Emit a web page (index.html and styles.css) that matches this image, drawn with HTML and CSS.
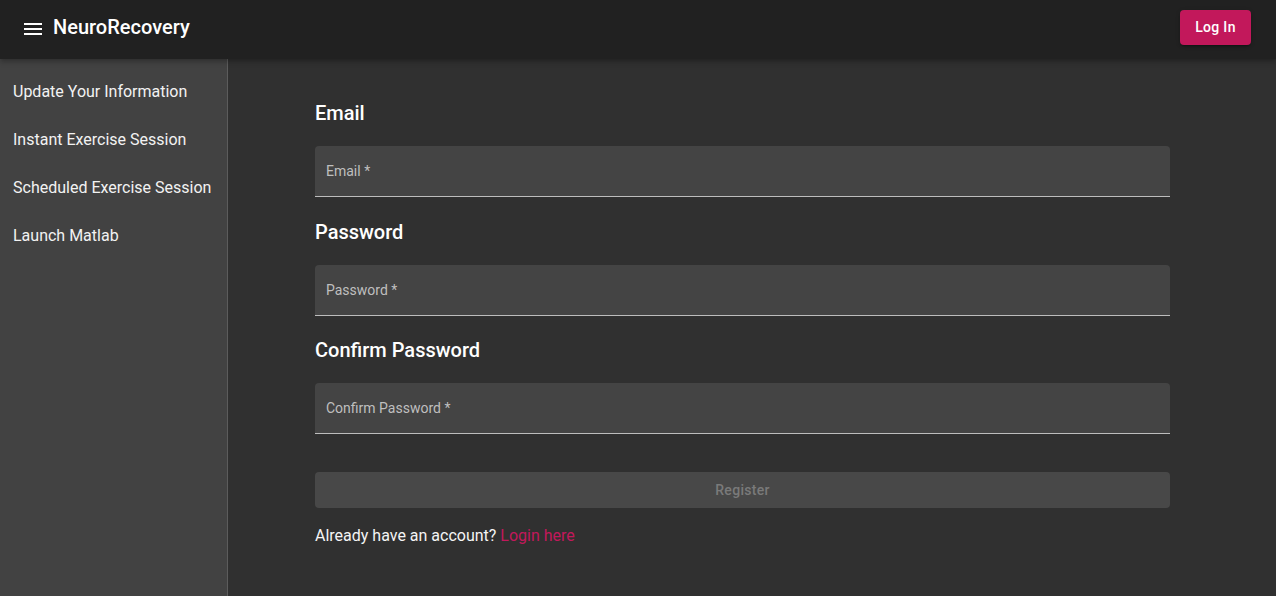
FILE: index.html
```html
<!DOCTYPE html>
<html lang="en">
<head>
<meta charset="utf-8">
<title>NeuroRecovery</title>
<link rel="stylesheet" href="styles.css">
</head>
<body>
<header class="appbar">
  <div class="appbar-left">
    <button class="menu-btn" aria-label="menu">
      <svg width="24" height="24" viewBox="0 0 24 24"><path fill="#fff" d="M3 18h18v-2H3v2zm0-5h18v-2H3v2zm0-7v2h18V6H3z"/></svg>
    </button>
    <h1 class="brand">NeuroRecovery</h1>
  </div>
  <button class="login-btn">Log In</button>
</header>
<div class="layout">
  <nav class="sidebar">
    <ul class="nav-list">
      <li class="nav-item">Update Your Information</li>
      <li class="nav-item">Instant Exercise Session</li>
      <li class="nav-item">Scheduled Exercise Session</li>
      <li class="nav-item">Launch Matlab</li>
    </ul>
  </nav>
  <main class="main">
    <form class="form">
      <h2 class="field-title">Email</h2>
      <div class="input"><span class="input-label">Email *</span></div>
      <h2 class="field-title">Password</h2>
      <div class="input"><span class="input-label">Password *</span></div>
      <h2 class="field-title">Confirm Password</h2>
      <div class="input"><span class="input-label">Confirm Password *</span></div>
      <button type="button" class="register-btn" disabled>Register</button>
      <p class="already">Already have an account? <a class="link" href="#">Login here</a></p>
    </form>
  </main>
</div>
</body>
</html>
```

FILE: styles.css
```css
* { box-sizing: border-box; }
html, body {
  margin: 0;
  padding: 0;
  height: 100%;
}
body {
  font-family: Roboto, "Liberation Sans", Arial, sans-serif;
  background: #303030;
  color: #fff;
  overflow: hidden;
}
.appbar {
  height: 59px;
  background: #212121;
  display: flex;
  align-items: center;
  justify-content: space-between;
  padding: 0 25px 0 21px;
  box-shadow: 0 2px 4px -1px rgba(0,0,0,0.2), 0 4px 5px 0 rgba(0,0,0,0.14);
  position: relative;
  z-index: 2;
}
.appbar-left {
  display: flex;
  align-items: center;
}
.menu-btn {
  background: none;
  border: 0;
  padding: 0;
  width: 24px;
  height: 24px;
  display: flex;
  margin-top: -2px;
  cursor: pointer;
}
.brand {
  margin: -5px 0 0 8px;
  font-size: 20px;
  font-weight: 500;
  line-height: 32px;
}
.login-btn {
  background: #c2185b;
  color: #fff;
  border: 0;
  border-radius: 4px;
  width: 71px;
  height: 35px;
  font-family: inherit;
  font-size: 14px;
  font-weight: 500;
  letter-spacing: 0.3px;
  margin-top: -5px;
  box-shadow: 0 3px 1px -2px rgba(0,0,0,0.2), 0 2px 2px 0 rgba(0,0,0,0.14), 0 1px 5px 0 rgba(0,0,0,0.12);
}
.layout {
  display: flex;
  height: calc(100% - 59px);
}
.sidebar {
  width: 228px;
  flex: none;
  background: #424242;
  border-right: 1px solid #5c5c5c;
}
.nav-list {
  list-style: none;
  margin: 0;
  padding: 8px 0;
}
.nav-item {
  height: 48px;
  display: flex;
  align-items: center;
  padding-left: 13px;
  font-size: 16px;
  color: #f2f2f2;
}
.main {
  flex: 1;
  padding: 38px 0 0 87px;
}
.form {
  width: 855px;
  display: flex;
  flex-direction: column;
}
.field-title {
  margin: 0 0 17px;
  font-size: 20px;
  font-weight: 500;
  line-height: 32px;
}
.input + .field-title {
  margin-top: 18.5px;
}
.input {
  height: 51px;
  flex: none;
  background: #444444;
  border-radius: 4px 4px 0 0;
  border-bottom: 1px solid #bdbdbd;
  display: flex;
  align-items: center;
  padding-left: 11px;
}
.input-label {
  font-size: 14px;
  color: #bfbfbf;
}
.register-btn {
  margin-top: 38px;
  height: 36px;
  flex: none;
  border: 0;
  border-radius: 4px;
  background: #484848;
  color: #7a7a7a;
  font-family: inherit;
  font-size: 14px;
  font-weight: 500;
  letter-spacing: 0.3px;
}
.already {
  margin: 16px 0 0;
  font-size: 16px;
  line-height: 24px;
  color: #f5f5f5;
}
.link {
  color: #c2185b;
  text-decoration: none;
}
```
